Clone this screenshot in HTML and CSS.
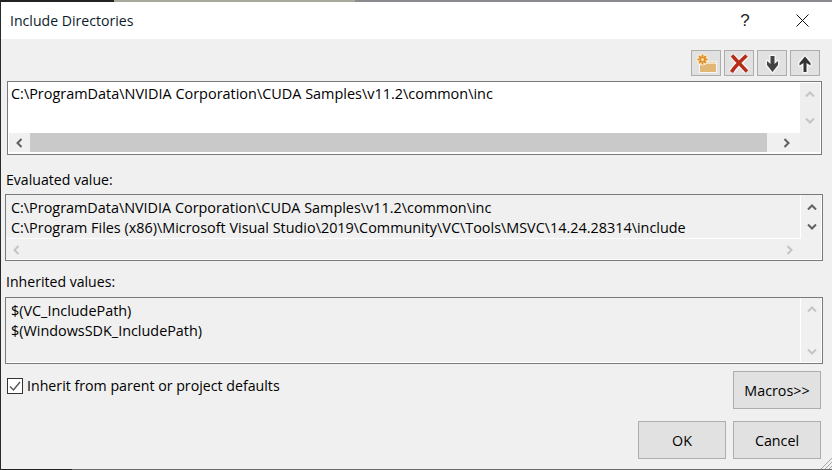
FILE: index.html
```html
<!DOCTYPE html>
<html lang="en">
<head>
<meta charset="utf-8">
<title>Include Directories</title>
<link rel="stylesheet" href="styles.css">
</head>
<body>
<div class="dialog">
  <header class="titlebar">
    <span class="title">Include Directories</span>
    <span class="help">?</span>
    <svg class="close" width="13" height="13" viewBox="0 0 13 13"><path d="M.5.5l12 12M12.500.5l-12 12" stroke="#111" fill="none"/></svg>
  </header>
  <main class="body">
    <div class="toolbar">
      <button class="tool"><svg width="24" height="22" viewBox="0 0 24 22">
        <path d="M5 8h8l1.500 1.500H23V21H5z" fill="#fff" opacity=".75"/>
        <path d="M6 9h7l1.500 1.500H22V20H6z" fill="#e2b775"/>
        <path d="M6 9h7l1.500 2H22v1H6z" fill="#f5e2c0"/>
        <circle cx="8.500" cy="7.500" r="6" fill="#fbeed8"/>
        <path d="M8.500 2.500v10M3.500 7.500h10M5 4l7 7M12 4l-7 7" stroke="#e08c24" stroke-width="1.900"/>
        <circle cx="8.500" cy="7.500" r="1.500" fill="#fbe3b0"/>
      </svg></button>
      <button class="tool"><svg width="24" height="22" viewBox="0 0 24 22">
        <path d="M5 3.500c3 3 10 11 15 16M19.500 3.500C15 8 8 14 4.500 20" stroke="#fff" stroke-width="6" fill="none" opacity=".8"/>
        <path d="M5 3.500c3 3 10 11 15 16M19.500 3.500C15 8 8 14 4.500 20" stroke="#b82c1a" stroke-width="3.600" fill="none"/>
      </svg></button>
      <button class="tool"><svg width="24" height="22" viewBox="0 0 24 22">
        <path d="M10.500 4h4v8l3.500-3v4l-5.500 7L7 13V9l3.500 3z" fill="#444" stroke="#f4f4f4" stroke-width="3" paint-order="stroke" stroke-linejoin="round"/>
      </svg></button>
      <button class="tool"><svg width="24" height="22" viewBox="0 0 24 22">
        <path d="M12 4.500l5.500 6.500v2.500L13.500 11v9h-3v-9l-4 2.500V11z" fill="#333" stroke="#f4f4f4" stroke-width="3" paint-order="stroke" stroke-linejoin="round"/>
      </svg></button>
    </div>

    <div class="box box-edit">
      <div class="box-text box-text-wide">C:\ProgramData\NVIDIA Corporation\CUDA Samples\v11.2\common\inc</div>
      <div class="vscroll">
        <svg class="chev" width="10" height="6" viewBox="0 0 10 6"><path d="M1 5.500l4-4 4 4" class="ln off"/></svg>
        <svg class="chev" width="10" height="6" viewBox="0 0 10 6"><path d="M1 .5l4 4 4-4" class="ln off"/></svg>
      </div>
      <div class="hscroll">
        <svg class="chev" width="6" height="10" viewBox="0 0 6 10"><path d="M5.500 1l-4 4 4 4" class="ln on"/></svg>
        <span class="thumb"></span>
        <svg class="chev" width="6" height="10" viewBox="0 0 6 10"><path d="M.5 1l4 4-4 4" class="ln on"/></svg>
      </div>
    </div>

    <div class="label label-eval">Evaluated value:</div>
    <div class="box box-eval">
      <div class="box-text">C:\ProgramData\NVIDIA Corporation\CUDA Samples\v11.2\common\inc<br>C:\Program Files (x86)\Microsoft Visual Studio\2019\Community\VC\Tools\MSVC\14.24.28314\include</div>
      <div class="vscroll vscroll-near">
        <svg class="chev" width="10" height="6" viewBox="0 0 10 6"><path d="M1 5.500l4-4 4 4" class="ln on"/></svg>
        <svg class="chev" width="10" height="6" viewBox="0 0 10 6"><path d="M1 .5l4 4 4-4" class="ln on"/></svg>
      </div>
      <div class="hscroll hscroll-off">
        <svg class="chev" width="6" height="10" viewBox="0 0 6 10"><path d="M5.500 1l-4 4 4 4" class="ln off"/></svg>
        <svg class="chev" width="6" height="10" viewBox="0 0 6 10"><path d="M.5 1l4 4-4 4" class="ln off"/></svg>
      </div>
    </div>

    <div class="label label-inh">Inherited values:</div>
    <div class="box box-inh">
      <div class="box-text">$(VC_IncludePath)<br>$(WindowsSDK_IncludePath)</div>
      <div class="vscroll">
        <svg class="chev" width="10" height="6" viewBox="0 0 10 6"><path d="M1 5.500l4-4 4 4" class="ln off"/></svg>
        <svg class="chev" width="10" height="6" viewBox="0 0 10 6"><path d="M1 .5l4 4 4-4" class="ln off"/></svg>
      </div>
    </div>

    <div class="bottom">
      <label class="check">
        <span class="checkbox"><svg width="14" height="14" viewBox="0 0 14 14"><path d="M2 7.500l3.500 3.500L12 3" stroke="#555" stroke-width="1.400" fill="none"/></svg></span>
        <span class="check-text">Inherit from parent or project defaults</span>
      </label>
      <button class="btn">Macros&gt;&gt;</button>
    </div>
    <div class="actions">
      <button class="btn">OK</button>
      <button class="btn">Cancel</button>
    </div>
  </main>
  <svg class="grip" width="12" height="12" viewBox="0 0 12 12"><path d="M12 1L1 12M12 5l-7 7M12 9l-3 3" stroke="#a8a8a8" fill="none"/></svg>
</div>
</body>
</html>
```
FILE: styles.css
```css
* { box-sizing: border-box; }
html, body { margin: 0; padding: 0; }
body { width: 832px; height: 470px; overflow: hidden; background: #f0f0f0; font-family: "Open Sans", "Noto Sans", sans-serif; font-size: 14px; color: #000; }

.dialog {
  position: relative;
  width: 832px; height: 470px;
  display: flex; flex-direction: column;
  border-left: 1px solid #2a2a2a;
  padding-top: 2px; padding-bottom: 1px;
  background:
    linear-gradient(90deg, #222 0 113px, #a9a89c 113px 354px, #8b8b8f 354px) top / 100% 2px no-repeat,
    linear-gradient(90deg, #222 0 71px, #6a6a6a 71px) bottom / 100% 1px no-repeat,
    #f0f0f0;
}

.titlebar { height: 37px; background: #fff; display: flex; align-items: center; padding-left: 9px; padding-right: 23px; flex: none; }
.title { flex: 1; font-size: 14.100px; color: #0b1b2b; }
.help { width: 12px; text-align: center; margin-right: 45px; font-family: "Liberation Sans", sans-serif; font-size: 17px; color: #222; }
.close { display: block; }

.body { flex: 1; display: flex; flex-direction: column; min-height: 0; }

.toolbar { display: flex; justify-content: flex-end; gap: 3px; padding: 11px 12px 0 0; flex: none; }
.tool { width: 30px; height: 26px; padding: 0; border: 1px solid #adadad; background: #e1e1e1; display: flex; align-items: center; justify-content: center; }
.tool svg { display: block; }

.box { display: grid; grid-template-columns: 1fr 20px; border: 1px solid #7a7a7a; box-shadow: inset -1px -1px 0 #fff; }
.box-text { font-size: 14.400px; line-height: 20px; white-space: nowrap; overflow: hidden; }
.box-text-wide { font-size: 14.450px; }

.box-edit { margin: 5px 10px 0 6px; height: 74px; grid-template-rows: 1fr 19px; padding: 1px 1px 2px 1px; background: #fff; }
.box-edit .box-text { padding: 1px 0 0 2px; }

.box-eval { margin: 0 9px 0 4px; height: 67px; grid-template-columns: 1fr 21px; grid-template-rows: 44px 1fr; }
.box-eval .box-text { padding: 3px 0 0 5px; border-right: 1px solid #fff; border-bottom: 1px solid #fff; }

.box-inh { margin: 0 9px 0 4px; height: 67px; grid-template-columns: 1fr 21px; }
.box-inh .box-text { padding: 3px 0 0 5px; border-right: 1px solid #fff; }

.vscroll { display: flex; flex-direction: column; align-items: center; justify-content: space-between; padding: 8px 0; background: #eee; }
.box-edit .vscroll { grid-row: 1 / 3; grid-column: 2; padding-bottom: 28px; }
.vscroll-near { justify-content: flex-start; gap: 14px; background: transparent; grid-row: 1; grid-column: 2; padding-top: 9px; }
.box-inh .vscroll { background: transparent; }

.hscroll { display: flex; align-items: center; background: #f0f0f0; }
.box-edit .hscroll { grid-row: 2; grid-column: 1; }
.box-edit .hscroll > svg:first-child { margin: 0 8px 0 7px; }
.box-edit .hscroll > svg:last-child { margin-left: 17px; }
.thumb { width: 737px; height: 19px; background: #c9c9c9; }
.hscroll-off { grid-column: 1; grid-row: 2; justify-content: space-between; padding: 0 8px 0 7px; background: transparent; }

.chev { display: block; flex: none; }
.ln { fill: none; stroke-width: 2; }
.on { stroke: #606060; }
.off { stroke: #c4c4c4; }

.label { font-size: 14.100px; line-height: 20px; padding-left: 5px; flex: none; }
.label-eval { margin-top: 15px; margin-bottom: 4px; }
.label-inh { margin-top: 11px; margin-bottom: 5px; }

.bottom { display: flex; justify-content: space-between; align-items: flex-start; padding: 7px 11px 0 6px; flex: none; }
.check { display: flex; align-items: center; gap: 4px; margin-top: 6px; }
.checkbox { width: 16px; height: 16px; border: 1px solid #333; background: #fff; display: flex; align-items: center; justify-content: center; }
.checkbox svg { display: block; }
.check-text { font-size: 14.200px; line-height: 18px; }

.btn { width: 88px; height: 38px; padding: 0; border: 1px solid #adadad; background: #e1e1e1; font: 14.300px "Open Sans", "Noto Sans", sans-serif; color: #000; }

.actions { display: flex; justify-content: flex-end; gap: 7px; padding: 12px 11px 0 0; flex: none; }

.grip { position: absolute; right: 0; bottom: 1px; }
```
